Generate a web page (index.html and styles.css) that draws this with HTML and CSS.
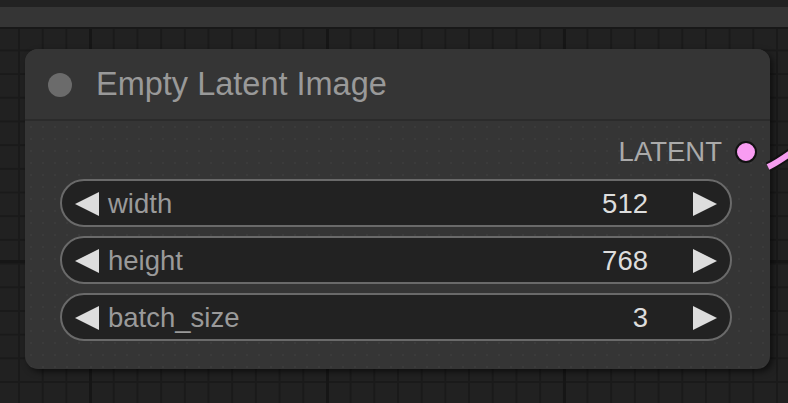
FILE: index.html
```html
<!DOCTYPE html>
<html>
<head>
<meta charset="utf-8">
<link rel="stylesheet" href="styles.css">
</head>
<body>
<div class="topbar"><div class="band"></div></div>
<div class="canvas">
  <div class="node">
    <div class="title">
      <span class="title-dot"></span>
      <span class="title-text">Empty Latent Image</span>
    </div>
    <div class="body">
      <div class="output">
        <span class="out-label">LATENT</span>
        <span class="out-dot"></span>
      </div>
      <div class="widgets">
        <div class="widget">
          <span class="arrow left"></span>
          <span class="w-label">width</span>
          <span class="w-value">512</span>
          <span class="arrow right"></span>
        </div>
        <div class="widget">
          <span class="arrow left"></span>
          <span class="w-label">height</span>
          <span class="w-value">768</span>
          <span class="arrow right"></span>
        </div>
        <div class="widget">
          <span class="arrow left"></span>
          <span class="w-label">batch_size</span>
          <span class="w-value">3</span>
          <span class="arrow right"></span>
        </div>
      </div>
    </div>
  </div>
  <svg class="wire" width="30" height="40" viewBox="0 0 30 40">
    <path d="M2 32 Q14 26 30 14" stroke="#111" stroke-width="10" fill="none"/>
    <path d="M2 32 Q14 26 30 14" stroke="#f59cef" stroke-width="6" fill="none"/>
  </svg>
</div>
</body>
</html>
```
FILE: styles.css
```css
html, body {
  margin: 0;
  padding: 0;
}
body {
  width: 788px;
  height: 403px;
  overflow: hidden;
  background-color: #212121;
  background-image:
    linear-gradient(90deg, #161616 3px, transparent 3px),
    linear-gradient(0deg, #161616 3px, transparent 3px),
    linear-gradient(90deg, #1a1a1a 2px, transparent 2px),
    linear-gradient(0deg, #1a1a1a 2px, transparent 2px);
  background-size: 237px 237px, 237px 237px, 23.7px 23.7px, 23.7px 23.7px;
  background-position: 89px 0, 0 263px, 18px 0, 0 4px;
  font-family: "Liberation Sans", Arial, sans-serif;
}
.topbar {
  height: 29px;
  background: #222222;
  padding-top: 7px;
  box-sizing: border-box;
  border-bottom: 2px solid #181818;
}
.band {
  height: 20px;
  background: #353535;
}
.canvas {
  position: relative;
  padding: 20px 0 0 25px;
}
.node {
  width: 745px;
  height: 320px;
  background: #353535;
  background-image: radial-gradient(circle, rgba(255, 255, 255, 0.03) 0.8px, transparent 1.2px);
  background-size: 12px 12px;
  border-radius: 13px;
  box-shadow: 3px 3px 6px rgba(0, 0, 0, 0.55);
  display: flex;
  flex-direction: column;
}
.title {
  height: 72px;
  box-sizing: border-box;
  padding-top: 1px;
  border-bottom: 2px solid #2b2b2b;
  background: #353535;
  border-radius: 13px 13px 0 0;
  display: flex;
  align-items: center;
  padding-left: 23px;
  gap: 24px;
  flex-shrink: 0;
}
.title-dot {
  width: 24px;
  height: 24px;
  border-radius: 50%;
  background: #6b6b6b;
}
.title-text {
  font-size: 32.5px;
  color: #999999;
  line-height: 1;
}
.body {
  flex: 1;
  display: flex;
  flex-direction: column;
}
.output {
  height: 58px;
  box-sizing: border-box;
  padding-top: 4px;
  display: flex;
  align-items: center;
  justify-content: flex-end;
  padding-right: 13px;
  gap: 13px;
}
.out-label {
  font-size: 27.5px;
  color: #aaaaaa;
  line-height: 1;
}
.out-dot {
  width: 18px;
  height: 18px;
  border-radius: 50%;
  background: #f99cf2;
  border: 2px solid #111111;
}
.widgets {
  display: flex;
  flex-direction: column;
  gap: 9px;
  padding: 0 38px 0 35px;
}
.widget {
  height: 48px;
  box-sizing: border-box;
  border: 2px solid #6a6a6a;
  border-radius: 24px;
  background: #222222;
  display: flex;
  align-items: center;
  padding: 1px 13px 0;
  font-size: 27.5px;
  line-height: 1;
}
.w-label {
  color: #9a9a9a;
  margin-left: 9px;
  flex: 1;
}
.w-value {
  color: #dddddd;
  margin-right: 45px;
}
.arrow {
  width: 0;
  height: 0;
  border-top: 12px solid transparent;
  border-bottom: 12px solid transparent;
}
.arrow.left {
  border-right: 24px solid #dddddd;
}
.arrow.right {
  border-left: 24px solid #dddddd;
}
.wire {
  position: absolute;
  left: 766px;
  top: 106px;
}
```
